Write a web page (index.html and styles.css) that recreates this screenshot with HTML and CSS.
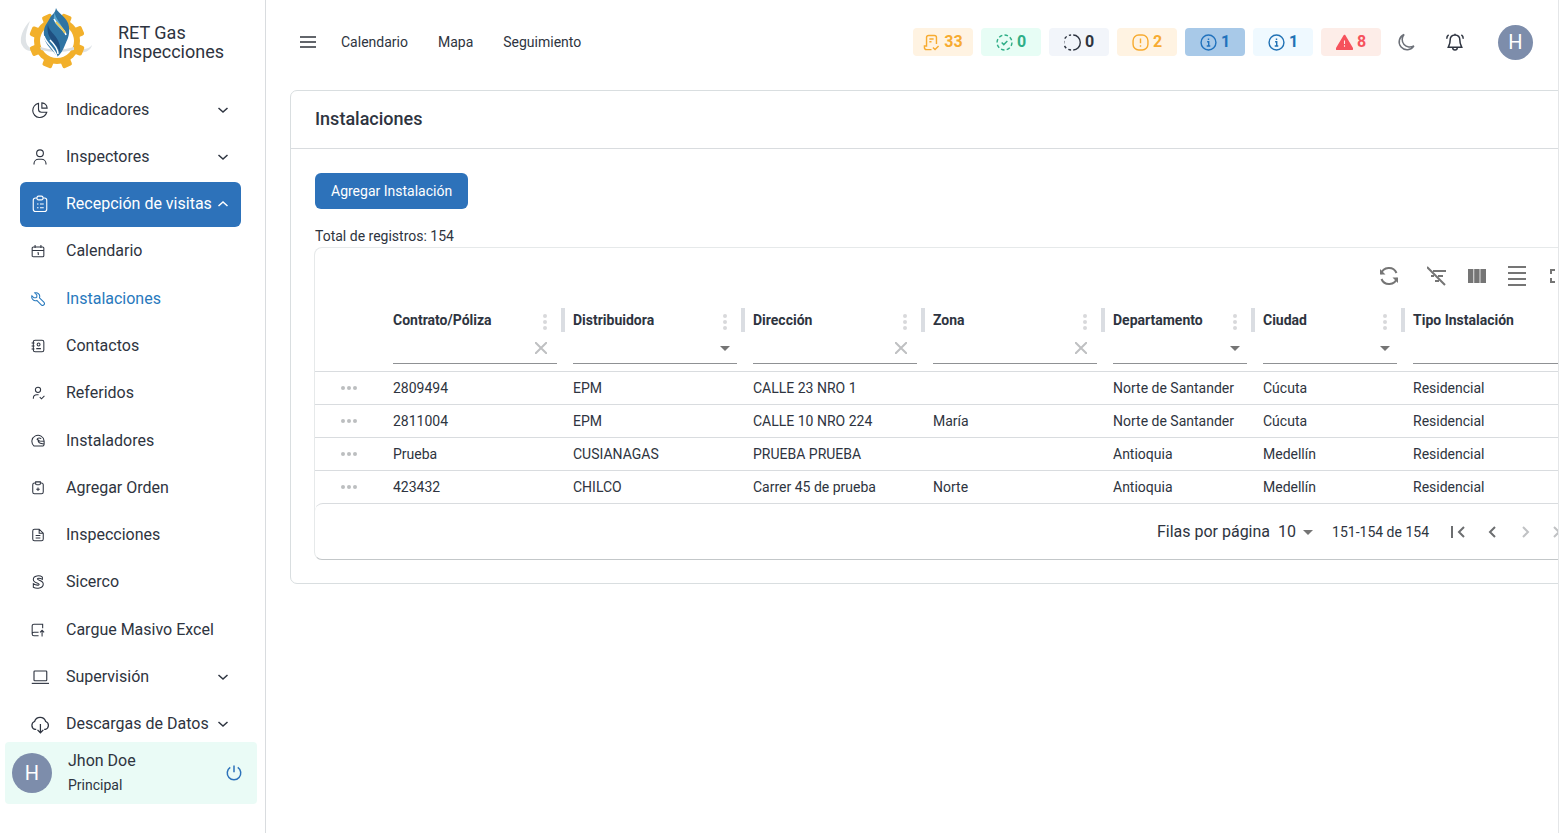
FILE: index.html
```html
<!DOCTYPE html>
<html lang="es">
<head>
    <meta charset="UTF-8">
    <meta name="viewport" content="width=device-width, initial-scale=1.0">
    <title>RET Gas Inspecciones</title>
    <link rel="stylesheet" href="styles.css">
</head>
<body>
    <aside class="sidebar">
        <div class="brand">
            <svg class="logo" viewBox="0 0 72 64">
                <path d="M10 14C2 22-1 33 2 38c3 6 8 7 12 5C5 40 3 32 10 14z" fill="#dfe3e6"/>
                <path d="M57 41c7 2 12 1 15-3-1 6-9 9-15 7z" fill="#dfe3e6"/>
                <g fill="#f2b02b">
                    <circle cx="37" cy="34" r="23"/>
                    <g transform="rotate(22 37 34)">
                        <rect x="32" y="54" width="10" height="8" rx="2"/>
                        <rect x="32" y="54" width="10" height="8" rx="2" transform="rotate(45 37 34)"/>
                        <rect x="32" y="54" width="10" height="8" rx="2" transform="rotate(90 37 34)"/>
                        <rect x="32" y="54" width="10" height="8" rx="2" transform="rotate(135 37 34)"/>
                        <rect x="32" y="54" width="10" height="8" rx="2" transform="rotate(180 37 34)"/>
                        <rect x="32" y="54" width="10" height="8" rx="2" transform="rotate(225 37 34)"/>
                        <rect x="32" y="54" width="10" height="8" rx="2" transform="rotate(270 37 34)"/>
                        <rect x="32" y="54" width="10" height="8" rx="2" transform="rotate(315 37 34)"/>
                    </g>
                </g>
                <circle cx="37" cy="34" r="17" fill="#fff"/>
                <path d="M20 40q17 5 34 0v3q-17 4-33 0z" fill="#d9dee2"/>
                <path d="M36 1c2 6 12 9 13 19 1 9-2 13-4 18-2 5-4 9-8 12-3-7-12-11-13-21-1-10 3-12 6-18C31 8 35 7 36 1z" fill="#2f74a3"/>
                <path d="M35 5c-1 6 8 12 9 21-6-8-13-9-9-21z" fill="#5aa7cf"/>
                <path d="M28 17c0 9 14 12 12 29-2-10-15-13-12-29z" fill="#1f4f80"/>
                <path d="M34 12c3 7 10 9 12 16M24 29c2 8 11 12 13 21M30 33c5 5 8 9 8 14" fill="none" stroke="#fff" stroke-width="1.500"/>
                <path d="M36 15c3 4 7 6 9 11" fill="none" stroke="#e9c95b"/>
            </svg>
            <span class="brand-name">RET Gas Inspecciones</span>
        </div>

        <nav class="menu">
            <button class="item" type="button">
                <svg class="icon" viewBox="0 0 24 24"><path d="M10 3.200A9.500 9.500 0 1 0 21 15h-7a4 4 0 0 1-4-4zM14.500 2.500v7h7a7.500 7.500 0 0 0-7-7z"/></svg>
                <span>Indicadores</span>
                <svg class="arrow" viewBox="0 0 12 12"><path d="M1.500 4l4.500 4 4.500-4"/></svg>
            </button>
            <button class="item" type="button">
                <svg class="icon" viewBox="0 0 24 24"><circle cx="12" cy="7" r="4.500"/><path d="M4 22v-1a6 6 0 0 1 6-6h4a6 6 0 0 1 6 6v1"/></svg>
                <span>Inspectores</span>
                <svg class="arrow" viewBox="0 0 12 12"><path d="M1.500 4l4.500 4 4.500-4"/></svg>
            </button>
            <button class="item open" type="button">
                <svg class="icon" viewBox="0 0 24 24"><path d="M8 4H6a3 3 0 0 0-3 3v12a3 3 0 0 0 3 3h12a3 3 0 0 0 3-3V7a3 3 0 0 0-3-3h-2"/><rect x="8" y="1.500" width="8" height="5" rx="2"/><path d="M8 12h2M12 12h5M8 17h2M12 17h5"/></svg>
                <span>Recepción de visitas</span>
                <svg class="arrow" viewBox="0 0 12 12"><path d="M1.500 8l4.500-4 4.500 4"/></svg>
            </button>
            <a class="item sub" href="#">
                <svg class="icon" viewBox="0 0 24 24"><rect x="2" y="5" width="20" height="17" rx="2"/><path d="M7 1.500V7M17 1.500V7M2 11h20M11 15h1.500v4"/></svg>
                <span>Calendario</span>
            </a>
            <a class="item sub active" href="#">
                <svg class="icon" viewBox="0 0 24 24"><path d="M6.500 1.500l3.500 3.500v3.500L8.500 10H5L1.500 6.500a6.500 6.500 0 0 0 8.500 8l7.500 7.500a3 3 0 0 0 4.500-4.500L14.500 10a6.500 6.500 0 0 0-8-8.500z"/></svg>
                <span>Instalaciones</span>
            </a>
            <a class="item sub" href="#">
                <svg class="icon" viewBox="0 0 24 24"><rect x="4" y="2" width="18" height="20" rx="3"/><circle cx="13" cy="9.500" r="2.500"/><path d="M9 16.500h8M1 7h5M1 12h5M1 17h5"/></svg>
                <span>Contactos</span>
            </a>
            <a class="item sub" href="#">
                <svg class="icon" viewBox="0 0 24 24"><circle cx="12" cy="6.500" r="4.500"/><path d="M4 22v-1a6 6 0 0 1 6-6h3M15 19l3 3 5-5"/></svg>
                <span>Referidos</span>
            </a>
            <a class="item sub" href="#">
                <svg class="icon" viewBox="0 0 24 24"><path d="M22.500 12A10.500 10.500 0 1 0 5 20.500h14a3 3 0 0 0 3.500-3V12zM22.500 12.500l-8-.5-4-3c1-3 5-2.500 7-1M12 10c0 5 4 7 10 7"/></svg>
                <span>Instaladores</span>
            </a>
            <a class="item sub" href="#">
                <svg class="icon" viewBox="0 0 24 24"><path d="M8 3.500H6a3 3 0 0 0-3 3V19a3 3 0 0 0 3 3h12a3 3 0 0 0 3-3V6.500a3 3 0 0 0-3-3h-2"/><path d="M8 1.500h8v3a2 2 0 0 1-2 2h-4a2 2 0 0 1-2-2zM12 11v6M9 14h6"/></svg>
                <span>Agregar Orden</span>
            </a>
            <a class="item sub" href="#">
                <svg class="icon" viewBox="0 0 24 24"><path d="M14 2H6a3 3 0 0 0-3 3v14a3 3 0 0 0 3 3h12a3 3 0 0 0 3-3V9zM14 2v7h7M8 13h8M8 17h8"/></svg>
                <span>Inspecciones</span>
            </a>
            <a class="item sub" href="#">
                <svg class="icon" viewBox="0 0 24 24"><path d="M19.500 3.500C15 0 4 .5 4 7.500c0 6.500 10 5.500 10 8.500 0 2-5 2-10-1v6c5 3 17 2.500 17-5.500 0-7-10-6-10-8.500 0-2 4-2 8.500.5z"/></svg>
                <span>Sicerco</span>
            </a>
            <a class="item sub" href="#">
                <svg class="icon" viewBox="0 0 24 24"><path d="M20 9V2H5a3 3 0 0 0-3 3v14a3 3 0 0 0 3 3h8M2 19a3 3 0 0 1 3-3h8M19 23v-10M15.500 16l3.500-3.500 3.500 3.500"/></svg>
                <span>Cargue Masivo Excel</span>
            </a>
            <button class="item" type="button">
                <svg class="icon" viewBox="0 0 24 24"><rect x="4" y="4" width="17" height="13" rx="1"/><path d="M1 20.500h23"/></svg>
                <span>Supervisión</span>
                <svg class="arrow" viewBox="0 0 12 12"><path d="M1.500 4l4.500 4 4.500-4"/></svg>
            </button>
            <button class="item" type="button">
                <svg class="icon cloud" viewBox="0 0 24 24"><path d="M7.500 18.500H6a5 5 0 0 1-.5-9.500 7 7 0 0 1 13.300 0 5 5 0 0 1-.3 9.500H17M12.500 12v10.500M9 19l3.500 3.500L16 19"/></svg>
                <span>Descargas de Datos</span>
                <svg class="arrow" viewBox="0 0 12 12"><path d="M1.500 4l4.500 4 4.500-4"/></svg>
            </button>
        </nav>

        <div class="user">
            <span class="avatar large">H</span>
            <div class="user-info">
                <span class="user-name">Jhon Doe</span>
                <span class="user-role">Principal</span>
            </div>
            <button class="icon-btn power" type="button" aria-label="Cerrar sesión">
                <svg viewBox="0 0 24 24"><path d="M7 4.500a9 9 0 1 0 10 0M12 2v9"/></svg>
            </button>
        </div>
    </aside>

    <main class="main">
        <header class="topbar">
            <button class="icon-btn burger" type="button" aria-label="Menú">
                <svg viewBox="0 0 16 16"><path d="M0 3h16M0 8h16M0 13h16"/></svg>
            </button>
            <nav class="links">
                <a href="#">Calendario</a>
                <a href="#">Mapa</a>
                <a href="#">Seguimiento</a>
            </nav>
            <div class="badges">
                <button class="badge warning" type="button">
                    <svg viewBox="0 0 24 24"><path d="M19 14V5a3 3 0 0 0-3-3H8a3 3 0 0 0-3 3v12H2v2a3 3 0 0 0 3 3h7M9 7h6M9 11h3M14 19l3 3 5-5"/></svg>33
                </button>
                <button class="badge success" type="button">
                    <svg viewBox="0 0 24 24"><circle cx="12" cy="12" r="10.500" stroke-dasharray="5 3.200"/><path d="M8 12l3 3 5-5"/></svg>0
                </button>
                <button class="badge neutral" type="button">
                    <svg viewBox="0 0 24 24"><path d="M13 1.500a10 10.500 0 0 1 0 21"/><path d="M10 22.500a10.500 10.500 0 0 1 0-21" stroke-dasharray="4 3.400"/></svg>0
                </button>
                <button class="badge warning" type="button">
                    <svg viewBox="0 0 24 24"><rect x="1.500" y="1.500" width="21" height="21" rx="8"/><path d="M12 6.500v6.500M12 16v2"/></svg>2
                </button>
                <button class="badge primary" type="button">
                    <svg viewBox="0 0 24 24"><circle cx="12" cy="12" r="10.500"/><path d="M10 11h2.300v6M9.500 17h5M12 6.500v2"/></svg>1
                </button>
                <button class="badge info" type="button">
                    <svg viewBox="0 0 24 24"><circle cx="12" cy="12" r="10.500"/><path d="M10 11h2.300v6M9.500 17h5M12 6.500v2"/></svg>1
                </button>
                <button class="badge error" type="button">
                    <svg viewBox="0 0 24 24"><path d="M12 2.500L23 21H1z" fill="currentColor" stroke-width="3" stroke-linejoin="round"/><path d="M12 9v5M12 16v2" stroke="#fdede8" stroke-width="1.500"/></svg>8
                </button>
            </div>
            <button class="icon-btn moon" type="button" aria-label="Modo oscuro">
                <svg viewBox="0 0 24 24"><path d="M9.500 2A10.500 10.500 0 1 0 22.500 17 10 10 0 0 1 9.500 2z"/></svg>
            </button>
            <button class="icon-btn bell" type="button" aria-label="Notificaciones">
                <svg viewBox="0 0 24 24"><path d="M12 2.500c-4.500 0-6.500 3-6.500 7 0 5-1 6-2.500 9.500h18c-1.500-3.500-2.500-4.500-2.500-9.500 0-4-2-7-6.500-7zM9 19.500a3 3 0 0 0 6 0M1 7.500c0-2 1-4 2.500-5M23 7.500c0-2-1-4-2.500-5M12 1v1"/></svg>
            </button>
            <span class="avatar">H</span>
        </header>

        <section class="card">
            <h1 class="card-title">Instalaciones</h1>
            <div class="card-body">
                <button class="btn-add" type="button">Agregar Instalación</button>
                <p class="total">Total de registros: 154</p>

                <div class="paper">
                    <div class="toolbar">
                        <button class="icon-btn tool refresh" type="button" aria-label="Actualizar">
                            <svg viewBox="0 0 20 20"><path d="M2 8a8.200 8.200 0 0 1 15.500-1M18 12a8.200 8.200 0 0 1-15.500 1"/><path d="M1 3v5.500h5.500zM19 17v-5.500h-5.500z" fill="currentColor" stroke="none"/></svg>
                        </button>
                        <button class="icon-btn tool" type="button" aria-label="Ocultar filtros">
                            <svg viewBox="0 0 20 20"><path d="M6 5h13M4 10h3M11 10h5M8 15h4M0 1l18 18"/></svg>
                        </button>
                        <button class="icon-btn tool" type="button" aria-label="Columnas">
                            <svg viewBox="0 0 20 20"><path d="M1 3h5.400v14H1zM7.200 3h5.400v14H7.200zM13.400 3H19v14h-5.600z" fill="currentColor" stroke="none"/></svg>
                        </button>
                        <button class="icon-btn tool" type="button" aria-label="Densidad">
                            <svg viewBox="0 0 20 20"><path d="M1 1h18M1 7h18M1 13h18M1 19h18"/></svg>
                        </button>
                        <button class="icon-btn tool" type="button" aria-label="Pantalla completa">
                            <svg viewBox="0 0 20 20"><path d="M4 8V4h4M12 4h4v4M16 12v4h-4M8 16H4v-4"/></svg>
                        </button>
                    </div>

                    <table class="grid">
                        <colgroup>
                            <col class="col-actions">
                            <col class="col-wide">
                            <col class="col-wide">
                            <col class="col-wide">
                            <col class="col-wide">
                            <col class="col-mid">
                            <col class="col-mid">
                            <col class="col-wide">
                        </colgroup>
                        <thead>
                            <tr>
                                <th></th>
                                <th>
                                    <div class="head"><label for="f-contrato">Contrato/Póliza</label><button class="dots" type="button" aria-label="Acciones"><i></i><i></i><i></i></button></div>
                                    <div class="filter"><input id="f-contrato" type="text"><button class="clear" type="button" aria-label="Borrar"><svg viewBox="0 0 12 12"><path d="M0 0l12 12M12 0L0 12"/></svg></button></div>
                                </th>
                                <th>
                                    <div class="head"><label for="f-distribuidora">Distribuidora</label><button class="dots" type="button" aria-label="Acciones"><i></i><i></i><i></i></button></div>
                                    <div class="filter select"><select id="f-distribuidora"><option></option><option>EPM</option></select></div>
                                </th>
                                <th>
                                    <div class="head"><label for="f-direccion">Dirección</label><button class="dots" type="button" aria-label="Acciones"><i></i><i></i><i></i></button></div>
                                    <div class="filter"><input id="f-direccion" type="text"><button class="clear" type="button" aria-label="Borrar"><svg viewBox="0 0 12 12"><path d="M0 0l12 12M12 0L0 12"/></svg></button></div>
                                </th>
                                <th>
                                    <div class="head"><label for="f-zona">Zona</label><button class="dots" type="button" aria-label="Acciones"><i></i><i></i><i></i></button></div>
                                    <div class="filter"><input id="f-zona" type="text"><button class="clear" type="button" aria-label="Borrar"><svg viewBox="0 0 12 12"><path d="M0 0l12 12M12 0L0 12"/></svg></button></div>
                                </th>
                                <th>
                                    <div class="head"><label for="f-departamento">Departamento</label><button class="dots" type="button" aria-label="Acciones"><i></i><i></i><i></i></button></div>
                                    <div class="filter select"><select id="f-departamento"><option></option><option>Antioquia</option></select></div>
                                </th>
                                <th>
                                    <div class="head"><label for="f-ciudad">Ciudad</label><button class="dots" type="button" aria-label="Acciones"><i></i><i></i><i></i></button></div>
                                    <div class="filter select"><select id="f-ciudad"><option></option><option>Medellín</option></select></div>
                                </th>
                                <th>
                                    <div class="head"><label for="f-tipo">Tipo Instalación</label><button class="dots" type="button" aria-label="Acciones"><i></i><i></i><i></i></button></div>
                                    <div class="filter select"><select id="f-tipo"><option></option><option>Residencial</option></select></div>
                                </th>
                            </tr>
                        </thead>
                        <tbody>
                            <tr>
                                <td><button class="dots row-dots" type="button" aria-label="Opciones"><i></i><i></i><i></i></button></td>
                                <td>2809494</td><td>EPM</td><td>CALLE 23 NRO 1</td><td></td><td>Norte de Santander</td><td>Cúcuta</td><td>Residencial</td>
                            </tr>
                            <tr>
                                <td><button class="dots row-dots" type="button" aria-label="Opciones"><i></i><i></i><i></i></button></td>
                                <td>2811004</td><td>EPM</td><td>CALLE 10 NRO 224</td><td>María</td><td>Norte de Santander</td><td>Cúcuta</td><td>Residencial</td>
                            </tr>
                            <tr>
                                <td><button class="dots row-dots" type="button" aria-label="Opciones"><i></i><i></i><i></i></button></td>
                                <td>Prueba</td><td>CUSIANAGAS</td><td>PRUEBA PRUEBA</td><td></td><td>Antioquia</td><td>Medellín</td><td>Residencial</td>
                            </tr>
                            <tr>
                                <td><button class="dots row-dots" type="button" aria-label="Opciones"><i></i><i></i><i></i></button></td>
                                <td>423432</td><td>CHILCO</td><td>Carrer 45 de prueba</td><td>Norte</td><td>Antioquia</td><td>Medellín</td><td>Residencial</td>
                            </tr>
                        </tbody>
                    </table>

                    <div class="pagination">
                        <label for="rows">Filas por página</label>
                        <span class="rows select"><select id="rows"><option>5</option><option selected>10</option><option>25</option></select></span>
                        <span class="range">151-154 de 154</span>
                        <button class="icon-btn page" type="button" aria-label="Primera página"><svg viewBox="0 0 16 16"><path d="M2 2v12M14 3L9 8l5 5"/></svg></button>
                        <button class="icon-btn page" type="button" aria-label="Página anterior"><svg viewBox="0 0 16 16"><path d="M11 3L6 8l5 5"/></svg></button>
                        <button class="icon-btn page" type="button" aria-label="Página siguiente" disabled><svg viewBox="0 0 16 16"><path d="M5 3l5 5-5 5"/></svg></button>
                        <button class="icon-btn page" type="button" aria-label="Última página" disabled><svg viewBox="0 0 16 16"><path d="M2 3l5 5-5 5M14 2v12"/></svg></button>
                    </div>
                </div>
            </div>
        </section>
    </main>
</body>
</html>
```
FILE: styles.css
```css
* {
    box-sizing: border-box;
}

body {
    margin: 0;
    display: flex;
    min-height: 100vh;
    font-family: Roboto, "Liberation Sans", sans-serif;
    font-size: 14px;
    line-height: 22px;
    color: #2e3440;
    background: #fff;
}

button,
input,
select {
    font: inherit;
    color: inherit;
    border: none;
    background: none;
    padding: 0;
    margin: 0;
}

button {
    cursor: pointer;
}

a {
    color: inherit;
    text-decoration: none;
}

svg {
    display: block;
    flex: none;
    fill: none;
    stroke: currentColor;
    stroke-width: 2;
}

.logo {
    stroke: none;
}

/* Menú lateral */
.sidebar {
    flex: none;
    width: 266px;
    min-height: 100vh;
    display: flex;
    flex-direction: column;
    padding-bottom: 29px;
    border-right: 1px solid #d9dcdf;
}

.brand {
    display: flex;
    align-items: center;
    gap: 26px;
    height: 87px;
    padding: 0 20px 9px;
}

.logo {
    width: 72px;
    height: 64px;
}

.brand-name {
    font-size: 18px;
    line-height: 19px;
    padding-top: 6px;
}

.menu {
    flex: 1;
    display: flex;
    flex-direction: column;
    gap: 2px;
    padding: 0 24px 0 20px;
}

.item {
    flex: 1;
    display: flex;
    align-items: center;
    padding: 0 12px 0 10px;
    border-radius: 6px;
    font-size: 16px;
    text-align: left;
}

.item span {
    flex: 1;
    white-space: nowrap;
}

.icon {
    width: 18px;
    height: 18px;
    margin: 0 17px 0 1px;
    stroke-width: 1.5;
}

.icon.cloud {
    width: 20px;
    height: 20px;
    margin: 0 16px 0 0;
}

.sub .icon {
    width: 14px;
    height: 14px;
    margin: 0 21px 0 1px;
    stroke-width: 1.8;
}

.arrow {
    width: 12px;
    height: 12px;
    stroke-width: 1.5;
}

.item.open {
    color: #fff;
    background: #2d72ba;
}

.item.active {
    color: #2879bd;
}

.user {
    display: flex;
    align-items: center;
    height: 62px;
    margin: -5px 8px 0 5px;
    padding: 0 14px 0 7px;
    border-radius: 4px;
    background: #eafbf6;
    z-index: 1;
}

.avatar {
    flex: none;
    display: flex;
    align-items: center;
    justify-content: center;
    width: 35px;
    height: 35px;
    border-radius: 50%;
    font-size: 20px;
    color: #fff;
    background: #7d8dab;
}

.avatar.large {
    width: 40px;
    height: 40px;
}

.user-info {
    flex: 1;
    display: flex;
    flex-direction: column;
    padding-left: 16px;
    line-height: 24px;
}

.user-name {
    font-size: 16px;
}

.icon-btn {
    flex: none;
    display: flex;
    align-items: center;
    justify-content: center;
}

.power svg {
    width: 18px;
    height: 18px;
    color: #2d72ba;
}

/* Contenido */
.main {
    flex: 1;
    min-width: 0;
    overflow: hidden;
    padding-left: 24px;
    border-right: 1px solid #e4e6e8;
}

.topbar {
    display: flex;
    align-items: center;
    height: 84px;
    margin-bottom: 6px;
    padding: 0 25px 0 10px;
}

.burger svg {
    width: 16px;
    height: 16px;
    color: #62656b;
}

.links {
    flex: 1;
    display: flex;
    gap: 30px;
    padding-left: 25px;
}

.badges {
    display: flex;
    gap: 8px;
}

.badge {
    display: flex;
    align-items: center;
    justify-content: center;
    gap: 4px;
    width: 60px;
    height: 28px;
    border-radius: 4px;
    font-size: 16px;
    font-weight: 700;
}

.badge svg {
    width: 17px;
    height: 17px;
}

.warning {
    color: #f7ab30;
    background: #fff3e2;
}

.success {
    color: #2fae87;
    background: #e7fdf5;
}

.neutral {
    color: #2e3440;
    background: #f2f5fa;
}

.primary {
    color: #2172bd;
    background: #a8c9e8;
}

.info {
    color: #2172b5;
    background: #eff9ff;
}

.error {
    color: #f6525c;
    background: #fdede8;
}

.moon {
    width: 18px;
    margin-left: 16px;
    color: #6c7078;
}

.bell {
    width: 18px;
    margin: 0 34px 0 31px;
}

.moon svg,
.bell svg {
    width: 18px;
    height: 18px;
}

/* La tarjeta es más ancha que la ventana, se corta a la derecha */
.card {
    margin-right: -52px;
    border: 1px solid #d9dee0;
    border-radius: 7px;
}

.card-title {
    margin: 0;
    padding: 16px 24px 17px;
    border-bottom: 1px solid #d9dcdf;
    font-size: 18px;
    line-height: 24px;
    font-weight: 500;
}

.card-body {
    padding: 24px 24px 23px;
}

.btn-add {
    height: 36px;
    padding: 0 16px;
    border-radius: 6px;
    color: #fff;
    background: #2d72ba;
}

.total {
    margin: 16px 0 0;
}

.paper {
    margin: 0 -1px;
    border: 1px solid #e6e9ea;
    border-bottom-color: #c3c7c9;
    border-radius: 8px;
}

.toolbar {
    display: flex;
    align-items: center;
    justify-content: flex-end;
    height: 56px;
    padding-right: 8px;
}

.tool {
    width: 40px;
    height: 40px;
    color: #757575;
}

.tool svg {
    width: 20px;
    height: 20px;
}

.refresh {
    margin-right: 8px;
}

.grid {
    width: 100%;
    table-layout: fixed;
    border-collapse: separate;
    border-spacing: 0;
}

.col-actions {
    width: 70px;
}

.col-wide {
    width: 180px;
}

.col-mid {
    width: 150px;
}

th {
    padding: 4px 8px 7px;
    border-bottom: 1px solid #d9dcdf;
    text-align: left;
    font-weight: 700;
}

.head {
    display: flex;
    align-items: center;
    justify-content: space-between;
    height: 24px;
    margin-right: -8px;
    padding-right: 14px;
    border-right: 4px solid #dadde2;
    white-space: nowrap;
}

.dots {
    display: flex;
    flex-direction: column;
    gap: 2px;
    padding-top: 3px;
}

.dots i {
    width: 4px;
    height: 4px;
    border-radius: 50%;
    background: #d8d9db;
}

.row-dots {
    flex-direction: row;
    margin-left: 18px;
    padding: 0;
}

.row-dots i {
    background: #bcbec0;
}

.filter {
    display: flex;
    align-items: center;
    height: 32px;
    border-bottom: 1px solid #8f9194;
}

.filter input {
    flex: 1;
    min-width: 0;
    height: 24px;
    outline: none;
}

.clear {
    padding-right: 10px;
    color: #bfc0c2;
}

.clear svg {
    width: 12px;
    height: 12px;
}

.select {
    position: relative;
}

.select select {
    width: 100%;
    appearance: none;
    outline: none;
}

.select::after {
    content: "";
    position: absolute;
    right: 7px;
    top: 14px;
    border: 5px solid transparent;
    border-top-color: #757575;
    border-bottom: none;
    pointer-events: none;
}

td {
    height: 33px;
    padding: 0 8px;
    border-bottom: 1px solid #d9dcdf;
    white-space: nowrap;
}

tbody tr:last-child td {
    height: 32px;
    border-bottom: none;
}

.pagination {
    display: flex;
    align-items: center;
    justify-content: flex-end;
    height: 56px;
    padding-right: 8px;
    border-top: 1px solid #d9dcdf;
    border-radius: 8px;
    font-size: 16px;
}

.rows {
    width: 42px;
    margin: 0 12px 0 8px;
}

.rows.select::after {
    top: 9px;
}

.range {
    margin-right: 12px;
    font-size: 14px;
}

.page {
    width: 34px;
    height: 34px;
    color: #6c6e70;
}

.page svg {
    width: 16px;
    height: 16px;
}

.page:disabled {
    color: #c0c2c4;
}
```
